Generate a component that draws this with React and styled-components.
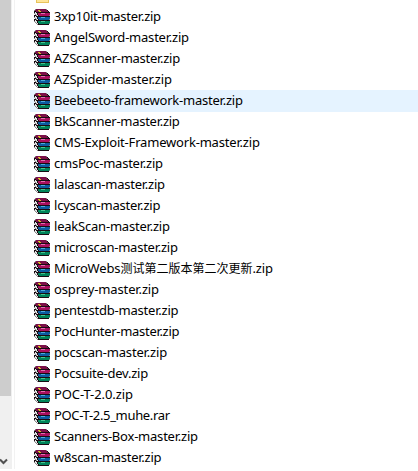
import React from 'react';
import styled, { createGlobalStyle } from 'styled-components';

const GlobalStyle = createGlobalStyle`
  * { box-sizing: border-box; }
  body { margin: 0; background: #fff; overflow: hidden; }
`;

const Window = styled.main`
  display: flex;
  width: 418px;
  height: 471px;
  overflow: hidden;
  background: #fff;
  color: #000;
  font: 13px/21px "Noto Sans", "Noto Sans CJK SC", sans-serif;
`;

const Scrollbar = styled.div`
  flex: none;
  display: flex;
  flex-direction: column;
  justify-content: space-between;
  width: 12px;
  height: 469px;
  background: #f0f0f0;
`;

const Thumb = styled.div`
  width: 11px;
  height: 396px;
  background: #cdcdcd;
`;

const Arrow = styled.svg`
  display: block;
  width: 8px;
  height: 7px;
  margin-bottom: 4px;
`;

const Divider = styled.div`
  flex: none;
  width: 1px;
  height: 469px;
  margin-left: 2px;
  background: #f2f2f2;
`;

const FileList = styled.div`
  flex: 1;
  min-width: 0;
  padding-left: 15px;
`;

const FolderRow = styled.div`
  height: 6px;
  padding-left: 6px;
  svg { display: block; }
`;

const Row = styled.div`
  display: flex;
  align-items: center;
  height: 21px;
  padding-left: 4px;
  background: ${(p) => (p.$active ? '#e5f3ff' : 'transparent')};
  box-shadow: ${(p) => (p.$active ? '0 1px #e5f3ff' : 'none')};
`;

const ArchiveGraphic = styled.svg`
  flex: none;
  width: 16px;
  height: 16px;
  margin-right: 4px;
`;

const Name = styled.span`
  white-space: nowrap;
  letter-spacing: ${(p) => p.$spacing}px;
`;

const Chinese = styled.span`
  font-size: 12px;
  letter-spacing: 0;
`;

const palette = {
  K: '#180c12',
  D: '#7c1048',
  M: '#a8105e',
  P: '#e070b0',
  Y: '#d8c020',
  W: '#e6e6e6',
  S: '#8c8c8c',
  B: '#0c5ca0',
  L: '#4cacdc',
  G: '#00845a',
  E: '#48c490',
};

const pixels = [
  '.SDDDDDDDDDDS...',
  'SDDDYYDDDDDDDK..',
  'KKDDDYYDDDDDDDK.',
  'KWKKKKKKKKKKKKKK',
  'SWWKMMMPPPPMMMMM',
  '.SWKMMMMMMMMMMMM',
  'KKSWKMMMMMMMMMMS',
  'KWKKKKKKKKKKKKKK',
  'SWWKBBBLLLLBBBBB',
  '.SWKBBBBBBBBBBBB',
  'KKSWKBBBBBBBBBBS',
  'KWKKKKKKKKKKKKKK',
  'SWWKGGGEEEEGGGGG',
  '.SWKGGGGGGGGGGGG',
  '..SWKGGGGGGGGGGS',
  '...SKKKKKKKKKKK.',
];

function ArchiveIcon() {
  return (
    <ArchiveGraphic viewBox="0 0 16 16" shapeRendering="crispEdges">
      {pixels.flatMap((line, y) =>
        [...line.matchAll(/([A-Z])\1*/g)].map((run) => (
          <rect
            key={`${run.index}-${y}`}
            x={run.index}
            y={y}
            width={run[0].length}
            height="1"
            fill={palette[run[1]]}
          />
        ))
      )}
    </ArchiveGraphic>
  );
}

const files = [
  ['3xp10it-master.zip', -0.25],
  ['AngelSword-master.zip', -0.22],
  ['AZScanner-master.zip', -0.27],
  ['AZSpider-master.zip', -0.17],
  ['Beebeeto-framework-master.zip', -0.22],
  ['BkScanner-master.zip', -0.27],
  ['CMS-Exploit-Framework-master.zip', -0.19],
  ['cmsPoc-master.zip', -0.23],
  ['lalascan-master.zip', -0.23],
  ['lcyscan-master.zip', -0.22],
  ['leakScan-master.zip', -0.21],
  ['microscan-master.zip', -0.25],
  ['MicroWebs测试第二版本第二次更新.zip', -0.15],
  ['osprey-master.zip', -0.12],
  ['pentestdb-master.zip', -0.2],
  ['PocHunter-master.zip', -0.3],
  ['pocscan-master.zip', -0.17],
  ['Pocsuite-dev.zip', -0.25],
  ['POC-T-2.0.zip', -0.1],
  ['POC-T-2.5_muhe.rar', -0.33],
  ['Scanners-Box-master.zip', -0.22],
  ['w8scan-master.zip', -0.25],
];

function FileName({ name, spacing }) {
  return (
    <Name $spacing={spacing}>
      {name.split(/([\u4e00-\u9fff]+)/).map((part, i) =>
        i % 2 ? <Chinese key={i}>{part}</Chinese> : part
      )}
    </Name>
  );
}

export default function App() {
  return (
    <Window>
      <GlobalStyle />
      <Scrollbar>
        <Thumb />
        <Arrow viewBox="0 0 8 7">
          <path d="M0 1.5 3.5 5 7 1.5" fill="none" stroke="#505050" strokeWidth="2" />
        </Arrow>
      </Scrollbar>
      <Divider />
      <FileList>
        <FolderRow>
          <svg width="13" height="3" viewBox="0 0 13 3" shapeRendering="crispEdges">
            <path d="M0 0h13v3H0z" fill="#e8c45c" />
            <path d="M1 0h11v2H1z" fill="#ffe69a" />
          </svg>
        </FolderRow>
        {files.map(([name, spacing]) => (
          <Row key={name} $active={name.startsWith('Beebeeto')}>
            <ArchiveIcon />
            <FileName name={name} spacing={spacing} />
          </Row>
        ))}
      </FileList>
    </Window>
  );
}
